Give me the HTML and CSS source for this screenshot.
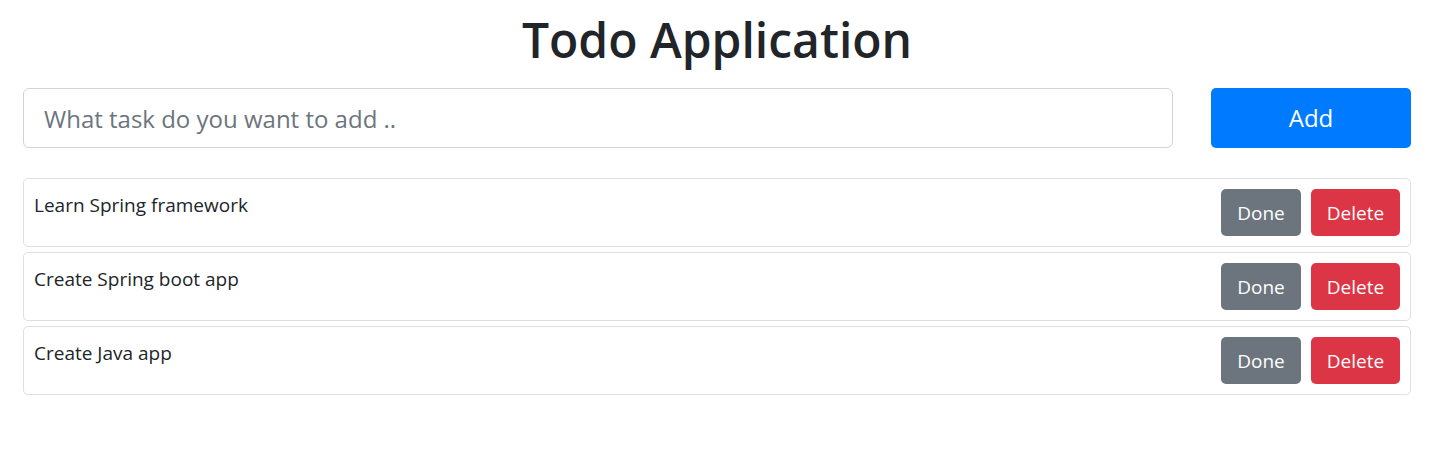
FILE: index.html
```html
<!DOCTYPE html>
<html lang="en">
<head>
<meta charset="utf-8">
<title>Todo Application</title>
<link rel="stylesheet" href="styles.css">
</head>
<body>
<main class="app">
  <h1 class="title">Todo Application</h1>
  <form class="add-form">
    <input class="task-input" type="text" aria-label="New task" placeholder="What task do you want to add ..">
    <button class="btn btn-add" type="submit">Add</button>
  </form>
  <ul class="tasks">
    <li class="task">
      <span class="task-name">Learn Spring framework</span>
      <button class="btn btn-done" type="button">Done</button>
      <button class="btn btn-delete" type="button">Delete</button>
    </li>
    <li class="task">
      <span class="task-name">Create Spring boot app</span>
      <button class="btn btn-done" type="button">Done</button>
      <button class="btn btn-delete" type="button">Delete</button>
    </li>
    <li class="task">
      <span class="task-name">Create Java app</span>
      <button class="btn btn-done" type="button">Done</button>
      <button class="btn btn-delete" type="button">Delete</button>
    </li>
  </ul>
</main>
</body>
</html>
```
FILE: styles.css
```css
* {
  box-sizing: border-box;
}

body {
  margin: 0;
  background: #fff;
  color: #212529;
  font-family: "Segoe UI", "Open Sans", "Noto Sans", sans-serif;
  font-size: 19px;
  line-height: 28px;
}

.app {
  padding: 10px 29px 10px 23px;
}

.title {
  margin: 0 0 18px;
  font-size: 48px;
  font-weight: 600;
  line-height: 60px;
  text-align: center;
}

.add-form {
  display: flex;
  gap: 38px;
  margin-bottom: 30px;
}

.task-input {
  flex: 1;
  min-width: 0;
  height: 60px;
  padding: 0 20px;
  border: 1px solid #ced4da;
  border-radius: 6px;
  color: #495057;
  font-family: inherit;
  font-size: 24px;
}

.task-input::placeholder {
  color: #6c757d;
  opacity: 1;
}

.btn {
  flex: none;
  padding: 0;
  border: 0;
  border-radius: 5px;
  color: #fff;
  font-family: inherit;
  font-size: 19px;
  line-height: 28px;
  cursor: pointer;
}

.btn-add {
  width: 200px;
  background: #007bff;
  font-size: 24px;
}

.tasks {
  display: grid;
  gap: 5px;
  margin: 0;
  padding: 0;
  list-style: none;
}

.task {
  display: flex;
  align-items: flex-start;
  gap: 10px;
  padding: 10px;
  border: 1px solid #dfdfdf;
  border-radius: 5px;
}

.task-name {
  flex: 1;
  padding-top: 2px;
}

.btn-done,
.btn-delete {
  height: 47px;
}

.btn-done {
  width: 80px;
  background: #6c757d;
}

.btn-delete {
  width: 89px;
  background: #dc3545;
}
```
